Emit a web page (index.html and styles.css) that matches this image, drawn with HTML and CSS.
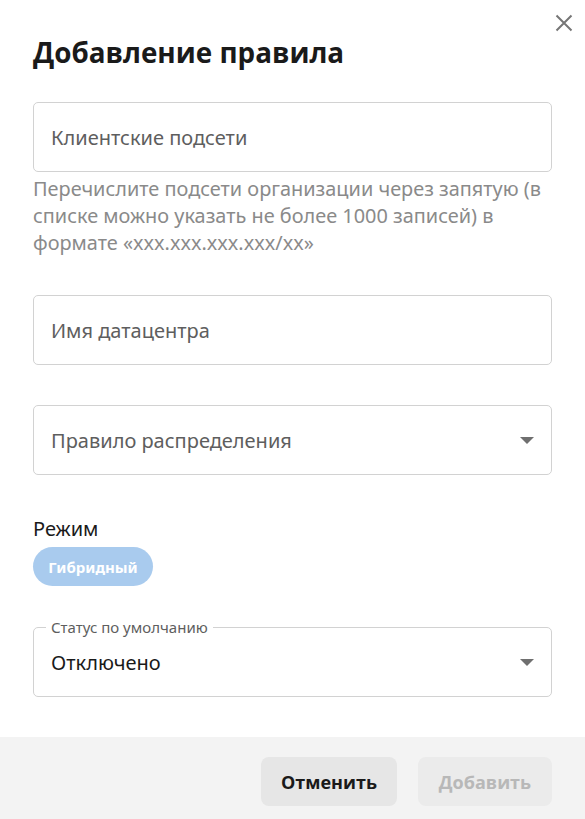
FILE: index.html
```html
<!DOCTYPE html>
<html lang="ru">
<head>
<meta charset="utf-8">
<link rel="stylesheet" href="styles.css">
</head>
<body>
<div class="dialog">
  <button class="close" aria-label="Закрыть">
    <svg width="18" height="18" viewBox="0 0 18 18"><path d="M1.5 1.5 L16.5 16.5 M16.5 1.5 L1.5 16.5" stroke="#767676" stroke-width="2" fill="none"/></svg>
  </button>
  <div class="content">
    <h1 class="title">Добавление правила</h1>
    <div class="field field-first"><span class="placeholder">Клиентские подсети</span></div>
    <p class="help">Перечислите подсети организации через запятую (в списке можно указать не более 1000 записей) в<br>формате «xxx.xxx.xxx.xxx/xx»</p>
    <div class="field field-second"><span class="placeholder">Имя датацентра</span></div>
    <div class="field field-select field-third"><span class="placeholder">Правило распределения</span><span class="arrow"></span></div>
    <div class="mode-label">Режим</div>
    <span class="chip">Гибридный</span>
    <div class="field field-select field-status">
      <span class="legend">Статус по умолчанию</span>
      <span class="value">Отключено</span><span class="arrow"></span>
    </div>
  </div>
  <div class="footer">
    <button class="btn btn-cancel">Отменить</button>
    <button class="btn btn-add" disabled>Добавить</button>
  </div>
</div>
</body>
</html>
```
FILE: styles.css
```css
* { box-sizing: border-box; }
html, body { margin: 0; padding: 0; background: #fff; }
body { font-family: "Noto Sans", "Open Sans", sans-serif; width: 585px; height: 819px; overflow: hidden; }
.dialog { position: relative; width: 585px; height: 819px; display: flex; flex-direction: column; }
.close { position: absolute; top: 14px; right: 12px; border: 0; background: none; padding: 0; width: 18px; height: 18px; cursor: pointer; }
.close svg { display: block; }
.content { padding: 32px 33px 0 33px; display: flex; flex-direction: column; align-items: flex-start; flex: 1; }
.title { margin: 0; font-family: "Open Sans", sans-serif; font-weight: 700; font-size: 27.8px; line-height: 40px; color: #1a1a1a; }
.field { width: 519px; height: 70px; border: 1px solid #d2d2d2; border-radius: 5px; display: flex; align-items: center; padding: 0 17px; position: relative; margin: 0; }
.field-first { margin-top: 30px; }
.field-second { margin-top: 39px; }
.field-third { margin-top: 40px; }
.placeholder { font-size: 20px; color: #5e5e5e; }
.help { margin: 3px 0 0 0; font-size: 19.9px; line-height: 27px; color: #8a8a8a; width: 545px; }
.arrow { position: absolute; right: 17px; top: 50%; margin-top: -3px; width: 0; height: 0; border-left: 7px solid transparent; border-right: 7px solid transparent; border-top: 7px solid #6f6f6f; }
.mode-label { margin-top: 40px; font-size: 20px; line-height: 28px; color: #1a1a1a; }
.chip { margin-top: 4px; display: inline-flex; align-items: center; justify-content: center; height: 39px; width: 120px; border-radius: 20px; background: #a9cbee; color: #fff; font-weight: 700; font-size: 15px; }
.field-status { margin-top: 41px; }
.legend { position: absolute; left: 12px; top: -10px; font-size: 15px; line-height: 18px; color: #5e5e5e; padding: 0 5px; background: #fff; }
.field-status .value { font-size: 20px; color: #1a1a1a; }
.footer { height: 82px; background: #f3f3f3; display: flex; justify-content: flex-end; align-items: flex-start; padding: 20px 33px 0 0; gap: 21px; }
.btn { height: 49px; border: 0; border-radius: 8px; font-family: "Open Sans", sans-serif; font-weight: 700; font-size: 18px; background: #e6e6e6; color: #1a1a1a; padding: 0 20px; }
.btn-cancel { width: 136px; }
.btn-add { width: 134px; color: #b8b8b8; background: #ebebeb; }
```
